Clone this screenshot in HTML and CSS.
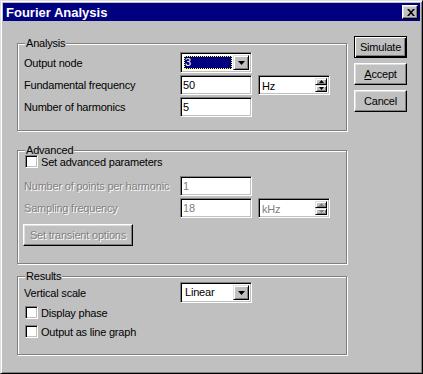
FILE: index.html
```html
<!DOCTYPE html>
<html lang="en">
<head>
    <meta charset="UTF-8">
    <title>Fourier Analysis</title>
    <link rel="stylesheet" href="styles.css">
</head>
<body>
    <div class="window">
        <div class="titlebar">
            <span class="title">Fourier Analysis</span>
            <span class="close-btn">
                <svg width="8" height="7" viewBox="0 0 8 7"><path d="M0 0h2l2 2.3 2-2.3h2l-3 3.5 3 3.5h-2l-2-2.3-2 2.3h-2l3-3.5z" fill="#000"/></svg>
            </span>
        </div>

        <div class="dialog">
            <div class="groups">
                <!-- Analysis -->
                <fieldset class="group analysis">
                    <legend>Analysis</legend>
                    <div class="row row-combo">
                        <label>Output node</label>
                        <div class="combo">
                            <span class="combo-value selected"><span>3</span></span>
                            <span class="drop-btn"><svg width="7" height="4" viewBox="0 0 7 4"><path d="M0 0h7l-3.5 4z" fill="#000"/></svg></span>
                        </div>
                    </div>
                    <div class="row">
                        <label>Fundamental frequency</label>
                        <input class="field" type="text" value="50">
                        <div class="spin">
                            <span class="spin-value">Hz</span>
                            <span class="spin-btns">
                                <span class="spin-btn"><svg width="5" height="3" viewBox="0 0 5 3"><path d="M2.5 0l2.5 3h-5z" fill="#000"/></svg></span>
                                <span class="spin-btn"><svg width="5" height="3" viewBox="0 0 5 3"><path d="M0 0h5l-2.5 3z" fill="#000"/></svg></span>
                            </span>
                        </div>
                    </div>
                    <div class="row">
                        <label>Number of harmonics</label>
                        <input class="field" type="text" value="5">
                    </div>
                </fieldset>

                <!-- Advanced -->
                <fieldset class="group advanced">
                    <legend>Advanced</legend>
                    <label class="check-row first"><span class="check"></span>Set advanced parameters</label>
                    <div class="row gap-top">
                        <label class="disabled">Number of points per harmonic</label>
                        <input class="field" type="text" value="1" disabled>
                    </div>
                    <div class="row">
                        <label class="disabled">Sampling frequency</label>
                        <input class="field" type="text" value="18" disabled>
                        <div class="spin is-disabled">
                            <span class="spin-value">kHz</span>
                            <span class="spin-btns">
                                <span class="spin-btn"><svg width="5" height="3" viewBox="0 0 5 3"><path d="M2.5 0l2.5 3h-5z" fill="#808080"/></svg></span>
                                <span class="spin-btn"><svg width="5" height="3" viewBox="0 0 5 3"><path d="M0 0h5l-2.5 3z" fill="#808080"/></svg></span>
                            </span>
                        </div>
                    </div>
                    <button class="btn wide" disabled>Set transient options</button>
                </fieldset>

                <!-- Results -->
                <fieldset class="group results">
                    <legend>Results</legend>
                    <div class="row row-combo">
                        <label>Vertical scale</label>
                        <div class="combo">
                            <span class="combo-value"><span>Linear</span></span>
                            <span class="drop-btn"><svg width="7" height="4" viewBox="0 0 7 4"><path d="M0 0h7l-3.5 4z" fill="#000"/></svg></span>
                        </div>
                    </div>
                    <label class="check-row"><span class="check"></span>Display phase</label>
                    <label class="check-row"><span class="check"></span>Output as line graph</label>
                </fieldset>
            </div>

            <div class="buttons">
                <button class="btn default">Simulate</button>
                <button class="btn"><u>A</u>ccept</button>
                <button class="btn">Cancel</button>
            </div>
        </div>
    </div>
</body>
</html>
```

FILE: styles.css
```css
* {
    box-sizing: border-box;
}

body {
    margin: 0;
    font-family: "Liberation Sans", Arial, sans-serif;
    font-size: 11px;
    letter-spacing: -0.2px;
    color: #000;
    background-color: #c0c0c0;
}

.window {
    width: 423px;
    height: 374px;
    padding: 2px;
    background-color: #c0c0c0;
    border: 1px solid;
    border-color: #dfdfdf #000 #000 #dfdfdf;
    box-shadow: inset 1px 1px #fff, inset -1px -1px #808080;
}

/* Title bar */
.titlebar {
    height: 18px;
    display: flex;
    align-items: center;
    justify-content: space-between;
    padding: 0 2px 0 3px;
    background-color: #000080;
}

.title {
    color: #fff;
    font-size: 13px;
    font-weight: bold;
    letter-spacing: 0;
}

.close-btn {
    width: 16px;
    height: 14px;
    display: flex;
    align-items: center;
    justify-content: center;
    padding-left: 1px;
    background-color: #c0c0c0;
    border: 1px solid;
    border-color: #fff #000 #000 #fff;
    box-shadow: inset -1px -1px #808080, inset 1px 1px #dfdfdf;
}

/* Layout */
.dialog {
    display: flex;
    padding-left: 14px;
}

.groups {
    width: 330px;
}

.buttons {
    display: flex;
    flex-direction: column;
    gap: 5px;
    margin-left: 7px;
    margin-top: 15px;
}

/* Group boxes */
.group {
    margin: 0;
    padding: 3px 6px 13px 6px;
    border: 1px solid #808080;
    box-shadow: inset 1px 1px #fff, 1px 1px #fff;
}

.group legend {
    margin-left: 1px;
    padding: 0 1px;
    line-height: 12px;
    background-color: #c0c0c0;
}

.analysis {
    margin-top: 16px;
}

.advanced {
    margin-top: 13px;
    padding-top: 0;
    padding-bottom: 17px;
}

.results {
    margin-top: 6px;
    padding-top: 0;
    padding-bottom: 13px;
}

.row {
    display: flex;
    align-items: center;
    height: 20px;
    margin-top: 2px;
}

.row:first-of-type {
    margin-top: 0;
}

.row-combo {
    height: 21px;
}

.row > label {
    width: 156px;
}

.row.gap-top {
    margin-top: 8px;
}

.disabled {
    color: #808080;
    text-shadow: 1px 1px #fff;
}

/* Sunken controls */
.field,
.combo,
.spin {
    width: 72px;
    height: 20px;
    background-color: #fff;
    border: 1px solid;
    border-color: #808080 #fff #fff #808080;
    box-shadow: inset 1px 1px #000, inset -1px -1px #c0c0c0;
}

.field {
    margin: 0;
    padding: 0 2px;
    font: inherit;
    letter-spacing: inherit;
    color: #000;
    outline: none;
}

.field:disabled {
    color: #808080;
    background-color: #fff;
}

.combo {
    height: 21px;
    display: flex;
    padding: 2px;
}

.combo-value {
    flex: 1;
    display: flex;
    align-items: center;
    padding: 1px;
}

.combo-value span {
    flex: 1;
    padding-left: 1px;
    line-height: 13px;
}

.combo-value.selected span {
    color: #fff;
    background-color: #000080;
    outline: 1px dotted #ffff00;
    outline-offset: -1px;
}

.drop-btn {
    width: 16px;
    display: flex;
    align-items: center;
    justify-content: center;
    background-color: #c0c0c0;
    border: 1px solid;
    border-color: #dfdfdf #000 #000 #dfdfdf;
    box-shadow: inset 1px 1px #fff, inset -1px -1px #808080;
}

.spin {
    display: flex;
    margin-left: 6px;
    padding: 2px;
}

.spin-value {
    flex: 1;
    padding-left: 1px;
    line-height: 16px;
}

.spin-btns {
    width: 12px;
    display: flex;
    flex-direction: column;
}

.spin-btn {
    flex: 1;
    display: flex;
    align-items: center;
    justify-content: center;
    background-color: #c0c0c0;
    border: 1px solid;
    border-color: #dfdfdf #000 #000 #dfdfdf;
    box-shadow: inset 1px 1px #fff, inset -1px -1px #808080;
}

.spin.is-disabled .spin-value {
    color: #808080;
}

/* Check boxes */
.check-row {
    display: flex;
    align-items: center;
    height: 19px;
}

.check-row.first {
    height: 13px;
    margin-top: -1px;
}

.check {
    width: 13px;
    height: 13px;
    margin-left: 1px;
    margin-right: 3px;
    background-color: #fff;
    border: 1px solid;
    border-color: #808080 #fff #fff #808080;
    box-shadow: inset 1px 1px #000, inset -1px -1px #c0c0c0;
}

/* Push buttons */
.btn {
    width: 53px;
    height: 22px;
    margin: 0;
    padding: 0;
    font: inherit;
    letter-spacing: inherit;
    color: #000;
    background-color: #c0c0c0;
    border: 1px solid;
    border-color: #fff #000 #000 #fff;
    box-shadow: inset -1px -1px #808080, inset 1px 1px #dfdfdf;
}

.btn u {
    text-decoration: underline;
}

.btn.default {
    border-color: #000;
    box-shadow: inset 1px 1px #fff, inset -1px -1px #000, inset -2px -2px #808080;
}

.btn:disabled {
    color: #808080;
    text-shadow: 1px 1px #fff;
}

.btn.wide {
    width: 110px;
    margin-top: 6px;
    margin-left: -1px;
}
```
